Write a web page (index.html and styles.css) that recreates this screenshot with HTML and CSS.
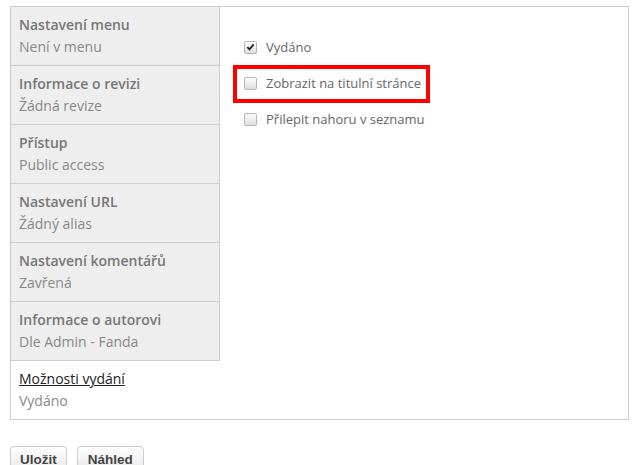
FILE: index.html
```html
<!DOCTYPE html>
<html lang="cs">
<head>
<meta charset="utf-8">
<link rel="stylesheet" href="styles.css">
</head>
<body>
<div class="vtabs">
  <ul class="tab-list">
    <li class="tab"><span class="tab-title">Nastavení menu</span><span class="tab-sum">Není v menu</span></li>
    <li class="tab"><span class="tab-title">Informace o revizi</span><span class="tab-sum">Žádná revize</span></li>
    <li class="tab"><span class="tab-title">Přístup</span><span class="tab-sum">Public access</span></li>
    <li class="tab"><span class="tab-title">Nastavení URL</span><span class="tab-sum">Žádný alias</span></li>
    <li class="tab"><span class="tab-title">Nastavení komentářů</span><span class="tab-sum">Zavřená</span></li>
    <li class="tab"><span class="tab-title">Informace o autorovi</span><span class="tab-sum">Dle Admin - Fanda</span></li>
    <li class="tab selected"><span class="tab-title">Možnosti vydání</span><span class="tab-sum">Vydáno</span></li>
  </ul>
  <div class="pane">
    <div class="item"><span class="cb checked"><svg viewBox="0 0 12 12" width="12" height="12"><path d="M2.6 6.2 L4.9 8.6 L9.4 3.2" fill="none" stroke="#222" stroke-width="2"/></svg></span><span class="lbl">Vydáno</span></div>
    <div class="item highlight"><span class="cb"></span><span class="lbl">Zobrazit na titulní stránce</span></div>
    <div class="item"><span class="cb"></span><span class="lbl">Přilepit nahoru v seznamu</span></div>
  </div>
</div>
<div class="actions">
  <button class="btn">Uložit</button>
  <button class="btn">Náhled</button>
</div>
</body>
</html>
```
FILE: styles.css
```css
html, body { margin: 0; padding: 0; background: #fff; }
body { padding: 6px 0 0 10px; font-family: "Open Sans", "Noto Sans", sans-serif; }
.vtabs {
  width: 617px;
  height: 412px;
  border: 1px solid #ccc;
  display: flex;
}
.tab-list {
  list-style: none;
  margin: 0;
  padding: 0;
  width: 209px;
  flex: none;
  display: flex;
  flex-direction: column;
}
.tab {
  background: #eee;
  border-right: 1px solid #ccc;
  border-bottom: 1px solid #ccc;
  padding: 7px 8px 7px 8px;
  display: flex;
  flex-direction: column;
}
.tab-title {
  font-size: 14px;
  line-height: 22px;
  font-weight: 600;
  color: #777;
  white-space: nowrap;
}
.tab-sum {
  font-size: 14px;
  line-height: 22px;
  color: #888;
  white-space: nowrap;
}
.tab.selected {
  background: #fff;
  border: none;
  padding-top: 7px;
}
.tab.selected .tab-title {
  color: #222;
  font-weight: 400;
  text-decoration: underline;
}
.pane {
  flex: 1;
  padding: 29px 0 0 24px;
  display: flex;
  flex-direction: column;
  align-items: flex-start;
  gap: 14px;
}
.item {
  display: flex;
  align-items: center;
  gap: 9px;
  height: 22px;
  position: relative;
}
.highlight::after {
  content: "";
  position: absolute;
  left: -11px;
  right: -9px;
  top: -7px;
  bottom: -9px;
  border: 4px solid #f00;
}
.cb {
  width: 11px;
  height: 11px;
  border: 1px solid #b5b5b5;
  border-radius: 2px;
  background: linear-gradient(#fdfdfd, #dedede);
  display: flex;
  align-items: center;
  justify-content: center;
}
.cb svg { display: block; }
.lbl {
  font-size: 13px;
  color: #666;
  white-space: nowrap;
}
.actions {
  margin-top: 26px;
  display: flex;
  gap: 10px;
}
.btn {
  font-family: "Liberation Sans", Arial, sans-serif;
  font-size: 13.5px;
  font-weight: 700;
  color: #444;
  background: linear-gradient(#fefefe, #e6e6e6);
  border: 1px solid #ccc;
  border-radius: 4px;
  padding: 5px 9px 6px;
  line-height: 16px;
  margin: 0;
}
.btn + .btn { padding: 5px 10px 6px; }
```
